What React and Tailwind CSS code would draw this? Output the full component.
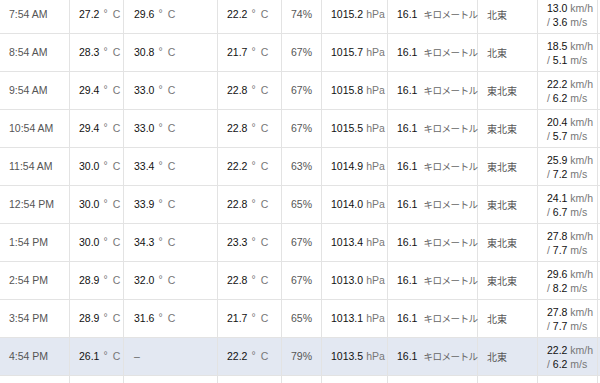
import React from 'react';

const rows = [
  { time: "7:54 AM", temp: "27.2", feel: "29.6", dew: "22.2", hum: "74%", pres: "1015.2", dir: "北東", kmh: "13.0", ms: "3.6" },
  { time: "8:54 AM", temp: "28.3", feel: "30.8", dew: "21.7", hum: "67%", pres: "1015.7", dir: "北東", kmh: "18.5", ms: "5.1" },
  { time: "9:54 AM", temp: "29.4", feel: "33.0", dew: "22.8", hum: "67%", pres: "1015.8", dir: "東北東", kmh: "22.2", ms: "6.2" },
  { time: "10:54 AM", temp: "29.4", feel: "33.0", dew: "22.8", hum: "67%", pres: "1015.5", dir: "東北東", kmh: "20.4", ms: "5.7" },
  { time: "11:54 AM", temp: "30.0", feel: "33.4", dew: "22.2", hum: "63%", pres: "1014.9", dir: "東北東", kmh: "25.9", ms: "7.2" },
  { time: "12:54 PM", temp: "30.0", feel: "33.9", dew: "22.8", hum: "65%", pres: "1014.0", dir: "東北東", kmh: "24.1", ms: "6.7" },
  { time: "1:54 PM", temp: "30.0", feel: "34.3", dew: "23.3", hum: "67%", pres: "1013.4", dir: "東北東", kmh: "27.8", ms: "7.7" },
  { time: "2:54 PM", temp: "28.9", feel: "32.0", dew: "22.8", hum: "67%", pres: "1013.0", dir: "東北東", kmh: "29.6", ms: "8.2" },
  { time: "3:54 PM", temp: "28.9", feel: "31.6", dew: "21.7", hum: "65%", pres: "1013.1", dir: "北東", kmh: "27.8", ms: "7.7" },
  { time: "4:54 PM", temp: "26.1", feel: null, dew: "22.2", hum: "79%", pres: "1013.5", dir: "北東", kmh: "22.2", ms: "6.2", hl: true },
];

const cols = "grid grid-cols-[70px_54px_94px_64px_40px_66px_90px_60px_60px_2px] h-[38px]";
const cell = "flex items-center whitespace-nowrap border-r border-[#e3e3e3] pl-[9px]";

function Temp({ v }) {
  if (!v) return <span className="text-[#666]">–</span>;
  return (
    <span className="text-[#111]">
      {v}
      <span className="text-[#777] ml-[4px] relative -top-[1px]">°</span>
      <span className="text-[#777] ml-[5px]">C</span>
    </span>
  );
}

function Row({ r }) {
  return (
    <div className={cols + " border-b border-[#e3e3e3] " + (r.hl ? "bg-[#e3e8f2]" : "bg-white")}>
      <div className={cell + " pl-[6px] text-[#555]"}>{r.time}</div>
      <div className={cell}><Temp v={r.temp} /></div>
      <div className={cell + " pl-[10px]"}><Temp v={r.feel} /></div>
      <div className={cell}><Temp v={r.dew} /></div>
      <div className={cell + " text-[#555]"}>{r.hum}</div>
      <div className={cell}>
        <span className="text-[#111]">{r.pres}</span>
        <span className="text-[#777] ml-[3px]">hPa</span>
      </div>
      <div className={cell}>
        <span className="text-[#111]">16.1</span>
        <span className="ml-[6px] text-[#666] tracking-[-0.5px] text-[9.5px] [font-family:'Noto_Sans_CJK_JP',sans-serif]">キロメートル</span>
      </div>
      <div className={cell + " text-[#555] text-[10px] [font-family:'Noto_Sans_CJK_JP',sans-serif]"}>{r.dir}</div>
      <div className={cell + " flex-col items-start justify-center leading-[14px]"}>
        <div>
          <span className="text-[#111]">{r.kmh}</span>
          <span className="text-[#777]"> km/h</span>
        </div>
        <div>
          <span className="text-[#777]">/ </span>
          <span className="text-[#111]">{r.ms}</span>
          <span className="text-[#777]"> m/s</span>
        </div>
      </div>
      <div></div>
    </div>
  );
}

export default function App() {
  return (
    <div className="w-[600px] h-[383px] overflow-hidden bg-white">
      <div className="-mt-[4px] text-[10.5px] [font-family:'Liberation_Sans',Arial,sans-serif]">
        {rows.map((r, i) => (
          <Row key={i} r={r} />
        ))}
        <div className={cols}>
          {Array.from({ length: 9 }).map((_, i) => (
            <div key={i} className={cell}></div>
          ))}
          <div></div>
        </div>
      </div>
    </div>
  );
}
